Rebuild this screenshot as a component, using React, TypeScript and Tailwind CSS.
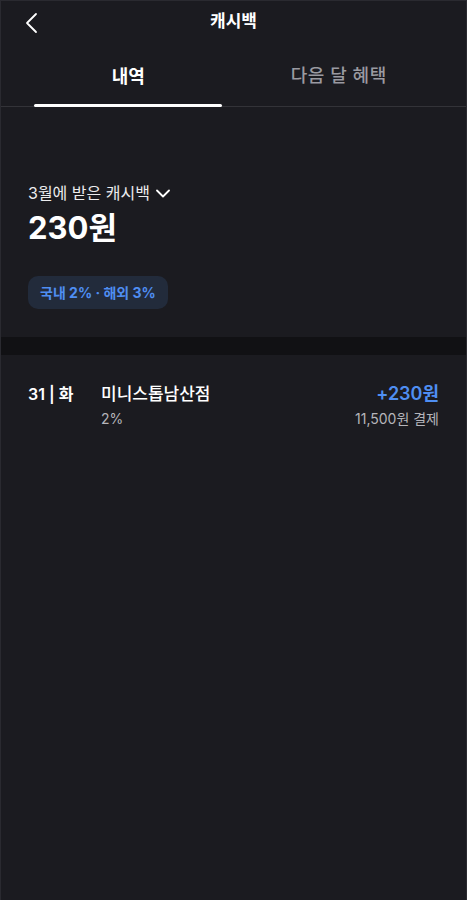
import React from "react";

const font = { fontFamily: 'Inter, "Noto Sans CJK KR", "Noto Sans", sans-serif' };

export default function App() {
  return (
    <div
      className="w-[467px] h-[900px] bg-[#1b1b20] text-white border-l border-t border-r border-[#2a2a30] flex flex-col"
      style={font}
    >
      {/* Header */}
      <div className="relative h-[42px] flex items-center justify-center">
        <svg
          className="absolute left-[24px] top-[11px]"
          width="14"
          height="22"
          viewBox="0 0 14 22"
          fill="none"
        >
          <path d="M11 2 L2 11 L11 20" stroke="white" strokeWidth="1.8" strokeLinecap="round" strokeLinejoin="round" />
        </svg>
        <span className="text-[17px] font-semibold">캐시백</span>
      </div>

      {/* Tabs */}
      <div className="border-b border-[#333338]">
        <div className="flex px-[22px] h-[63px]">
          <div className="flex-1 flex flex-col items-center">
            <div className="flex-1 flex items-center pt-[5px] text-[18px] font-bold">내역</div>
            <div className="w-[188px] h-[3px] bg-white rounded-full mb-[-1px]" />
          </div>
          <div className="flex-1 flex flex-col items-center">
            <div className="flex-1 flex items-center pt-[5px] text-[18px] font-medium text-[#9a9aa0] tracking-[0.5px]">다음 달 혜택</div>
            <div className="h-[3px]" />
          </div>
        </div>
      </div>

      {/* Summary */}
      <div className="px-[27px] pt-[74px] pb-[28px]">
        <div className="flex items-center gap-[6px] text-[16px] text-[#ececee]">
          <span>3월에 받은 캐시백</span>
          <svg width="14" height="9" viewBox="0 0 14 9" fill="none">
            <path d="M1 1.5 L7 7.5 L13 1.5" stroke="white" strokeWidth="1.8" strokeLinecap="round" strokeLinejoin="round" />
          </svg>
        </div>
        <div className="text-[31px] font-bold leading-[40px] mt-[3px]">230원</div>
        <div className="mt-[28px] inline-flex items-center h-[33px] px-[12px] rounded-[10px] bg-[#222b3b] text-[#4f8ef2] text-[14px] font-bold">
          국내 2% · 해외 3%
        </div>
      </div>

      {/* Separator */}
      <div className="h-[18px] bg-[#111114]" />

      {/* Row */}
      <div className="flex px-[27px] pt-[27px]">
        <div className="w-[73px] text-[16px] font-semibold leading-[24px]">31 | 화</div>
        <div className="flex-1 flex flex-col">
          <span className="text-[17px] font-medium leading-[24px]">미니스톱남산점</span>
          <span className="text-[14px] text-[#b5b5ba] mt-[2px]">2%</span>
        </div>
        <div className="flex flex-col items-end">
          <span className="text-[18px] font-semibold leading-[24px] text-[#4f8ef2]">+230원</span>
          <span className="text-[14px] text-[#b5b5ba] mt-[2px]">11,500원 결제</span>
        </div>
      </div>
    </div>
  );
}
